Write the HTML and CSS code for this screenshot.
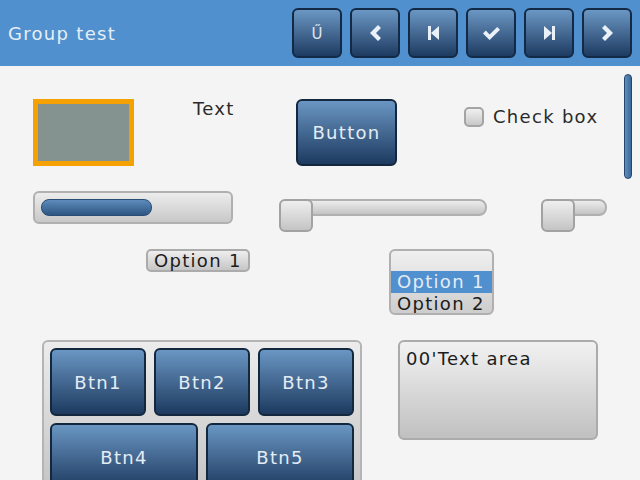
FILE: index.html
```html
<!DOCTYPE html>
<html>
<head>
<meta charset="utf-8">
<link rel="stylesheet" href="styles.css">
</head>
<body>
<header class="header">
  <div class="title">Group test</div>
  <div class="tools">
    <div class="tbtn"><span class="glyph">Ű</span></div>
    <div class="tbtn"><svg width="11" height="16" viewBox="0 0 11 16"><polygon points="0,8 8,0 11,3 6,8 11,13 8,16" fill="#eaf0f7"/></svg></div>
    <div class="tbtn"><svg width="11" height="14" viewBox="0 0 11 14"><rect x="0" y="0" width="3" height="14" fill="#eaf0f7"/><polygon points="3,7 11,0 11,14" fill="#eaf0f7"/></svg></div>
    <div class="tbtn"><svg width="17" height="13" viewBox="0 0 17 13"><polygon points="0,6.4 2.8,3.6 6.6,7.4 14.2,0 17,2.8 6.6,13" fill="#eaf0f7"/></svg></div>
    <div class="tbtn"><svg width="11" height="14" viewBox="0 0 11 14"><polygon points="0,0 8,7 0,14" fill="#eaf0f7"/><rect x="8" y="0" width="3" height="14" fill="#eaf0f7"/></svg></div>
    <div class="tbtn"><svg width="11" height="16" viewBox="0 0 11 16"><polygon points="11,8 3,0 0,3 5,8 0,13 3,16" fill="#eaf0f7"/></svg></div>
  </div>
</header>
<main class="content">
  <div class="row row1">
    <div class="cell"><div class="swatch"></div></div>
    <div class="cell"><div class="label">Text</div></div>
    <div class="cell"><div class="btn big-btn">Button</div></div>
    <div class="cell">
      <div class="check"><span class="box"></span><span class="label">Check box</span></div>
    </div>
  </div>
  <div class="row row2">
    <div class="cell"><div class="bar"><div class="bar-ind" style="width:111px"></div></div></div>
    <div class="cell">
      <div class="slider slider-long"><div class="track"></div><div class="knob"></div></div>
    </div>
    <div class="cell">
      <div class="slider slider-short"><div class="track"></div><div class="knob"></div></div>
    </div>
  </div>
  <div class="row row3">
    <div class="cell"><div class="dd">Option 1</div></div>
    <div class="cell">
      <div class="ddlist">
        <div class="opt"></div>
        <div class="opt sel">Option 1</div>
        <div class="opt">Option 2</div>
      </div>
    </div>
  </div>
  <div class="row row4">
    <div class="cell">
      <div class="btnm">
        <div class="btnm-row">
          <div class="btn">Btn1</div>
          <div class="btn">Btn2</div>
          <div class="btn">Btn3</div>
        </div>
        <div class="btnm-row">
          <div class="btn">Btn4</div>
          <div class="btn">Btn5</div>
        </div>
      </div>
    </div>
    <div class="cell"><div class="ta">00'Text area</div></div>
  </div>
</main>
<div class="scrollbar"></div>
</body>
</html>
```

FILE: styles.css
```css
html, body {
  margin: 0;
  padding: 0;
  width: 640px;
  height: 480px;
  overflow: hidden;
}
body {
  background: #f4f4f4;
  font-family: "DejaVu Sans", sans-serif;
  font-size: 18px;
  line-height: 21px;
  letter-spacing: 1.3px;
  color: #2a2a2a;
  position: relative;
}
.header {
  height: 66px;
  box-sizing: border-box;
  background: #5190ce;
  display: flex;
  align-items: center;
  justify-content: space-between;
  padding: 8px;
}
.title {
  color: #e6eef6;
}
.tools {
  display: flex;
  gap: 8px;
}
.tbtn {
  width: 50px;
  height: 50px;
  box-sizing: border-box;
  border: 2px solid #122a45;
  border-radius: 6px;
  background: linear-gradient(#6b97c4, #1e3b61);
  display: flex;
  align-items: center;
  justify-content: center;
}
.tbtn svg { display: block; }
.glyph {
  font-size: 15px;
  letter-spacing: 0;
  color: #e0e6ee;
  line-height: 16px;
  margin-top: 1px;
}
.content {
  padding-top: 33px;
  display: flex;
  flex-direction: column;
  gap: 25px;
}
.row {
  display: grid;
  align-items: start;
}
.row1 { padding-left: 33px; grid-template-columns: 160px 103px 168px auto; height: 67px; }
.row2 { padding-left: 33px; grid-template-columns: 246px 262px auto; height: 33px; }
.row3 { padding-left: 146px; grid-template-columns: 243px auto; height: 66px; }
.row4 { padding-left: 42px; grid-template-columns: 356px auto; }

.swatch {
  width: 101px;
  height: 67px;
  box-sizing: border-box;
  border: 5px solid #f5a102;
  background: #849390;
}
.label { color: #2a2a2a; }
.row1 > .cell:nth-child(2) .label { margin-top: -1px; }

.btn {
  box-sizing: border-box;
  border: 2px solid #13283f;
  border-radius: 6px;
  background: linear-gradient(#6a96c3, #1d3a5f);
  color: #e4ecf4;
  display: flex;
  align-items: center;
  justify-content: center;
}
.big-btn {
  width: 101px;
  height: 67px;
}
.check {
  display: flex;
  align-items: center;
  gap: 9px;
  margin-top: 7px;
}
.box {
  width: 20px;
  height: 20px;
  box-sizing: border-box;
  border: 2px solid #a4a4a4;
  border-radius: 5px;
  background: linear-gradient(#f0f0f0, #c8c8c8);
}

.bar {
  width: 200px;
  height: 33px;
  box-sizing: border-box;
  border: 2px solid #b0b0b0;
  border-radius: 6px;
  background: linear-gradient(#ececec, #c8c8c8);
  padding: 6px;
}
.bar-ind {
  height: 17px;
  box-sizing: border-box;
  border: 1px solid #2a4d76;
  border-radius: 8px;
  background: linear-gradient(#5d8bbb, #2d5683);
}
.slider {
  position: relative;
  height: 33px;
}
.slider-long { width: 208px; }
.slider-short { width: 66px; }
.track {
  margin: 8px 0 0 1px;
  height: 17px;
  box-sizing: border-box;
  border: 2px solid #b0b0b0;
  border-radius: 8px;
  background: linear-gradient(#ececec, #c4c4c4);
}
.knob {
  position: absolute;
  left: 0;
  top: 0;
  width: 34px;
  height: 33px;
  box-sizing: border-box;
  border: 2px solid #a2a2a2;
  border-radius: 6px;
  background: linear-gradient(#efefef, #c4c4c4);
}

.dd {
  width: 104px;
  height: 23px;
  box-sizing: border-box;
  border: 2px solid #ababab;
  border-radius: 5px;
  background: linear-gradient(#eeeeee, #c6c6c6);
  padding-left: 6px;
  line-height: 19px;
  color: #1c1c1c;
}
.ddlist {
  width: 105px;
  height: 66px;
  box-sizing: border-box;
  border: 2px solid #b0b0b0;
  border-radius: 6px;
  background: linear-gradient(#f0f0f0, #cdcdcd);
  overflow: hidden;
  color: #1c1c1c;
}
.opt {
  height: 22px;
  line-height: 22px;
  padding-left: 6px;
}
.opt:first-child { height: 20px; }
.opt.sel {
  background: #5190ce;
  color: #e2ecf6;
}

.btnm {
  width: 320px;
  height: 160px;
  box-sizing: border-box;
  border: 2px solid #b4b4b4;
  border-radius: 6px;
  background: linear-gradient(#ececec, #c6c6c6 90%);
  padding: 6px;
  display: flex;
  flex-direction: column;
  gap: 7px;
}
.btnm-row {
  display: flex;
  gap: 8px;
  height: 68px;
}
.btnm-row .btn { flex: 1; }

.ta {
  width: 200px;
  height: 100px;
  box-sizing: border-box;
  border: 2px solid #ababab;
  border-radius: 6px;
  background: linear-gradient(#f2f2f2, #c0c0c0);
  padding: 6px 6px;
  color: #1c1c1c;
}

.scrollbar {
  position: absolute;
  left: 624px;
  top: 74px;
  width: 8px;
  height: 105px;
  box-sizing: border-box;
  border: 1px solid #24466e;
  border-radius: 4px;
  background: linear-gradient(90deg, #5f8dbd, #3a6798);
}
```
